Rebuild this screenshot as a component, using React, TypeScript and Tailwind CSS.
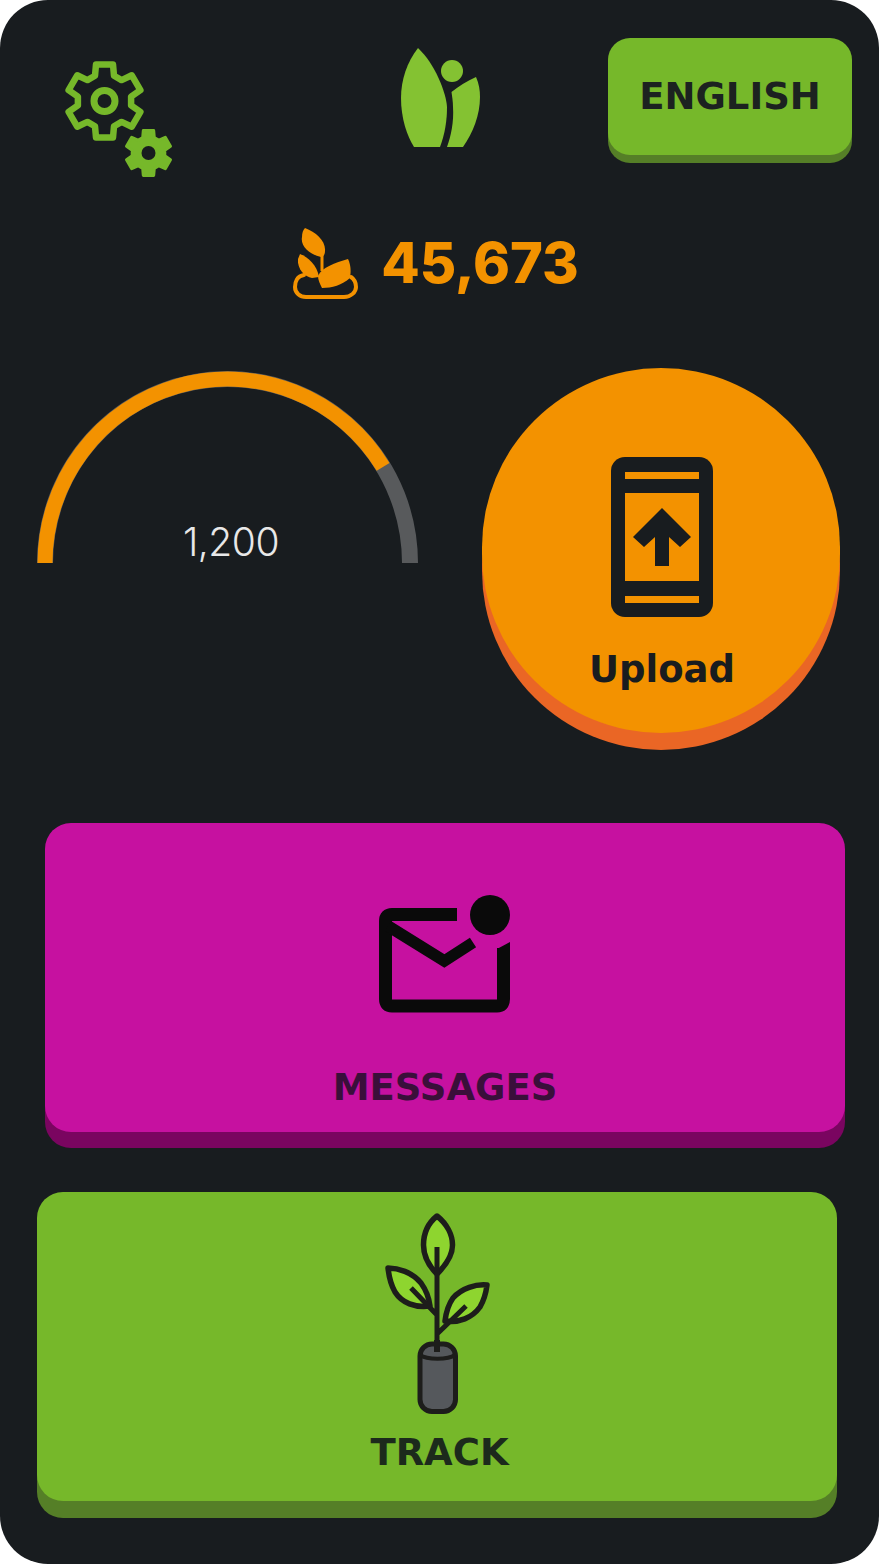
function gearPath(cx: number, cy: number, rOuter: number, rInner: number) {
  // six teeth, first one pointing up
  const pts: string[] = []
  for (let i = 0; i < 6; i++) {
    const a = (i * Math.PI) / 3 - Math.PI / 2
    const offs = [
      [-0.36, rInner],
      [-0.23, rOuter],
      [0.23, rOuter],
      [0.36, rInner],
    ]
    offs.forEach(([o, r]) => {
      const t = a + o
      pts.push(`${(cx + r * Math.cos(t)).toFixed(1)} ${(cy + r * Math.sin(t)).toFixed(1)}`)
    })
  }
  return 'M' + pts.join('L') + 'Z'
}

function GearsIcon() {
  return (
    <svg width="110" height="120" viewBox="64 59 110 120" className="mt-[21px] ml-[64px] shrink-0">
      <path d={gearPath(104.5, 101, 37.5, 27)} fill="none" stroke="#76b82a" strokeWidth="6.5" strokeLinejoin="round" />
      <circle cx="104.500" cy="101" r="10.5" fill="none" stroke="#76b82a" strokeWidth="7" />
      <path d={gearPath(148.5, 153, 23, 16.5)} fill="#76b82a" stroke="#76b82a" strokeWidth="3" strokeLinejoin="round" />
      <circle cx="148.500" cy="153" r="7" fill="#181c1f" />
    </svg>
  )
}

function LogoIcon() {
  return (
    <svg width="80" height="100" viewBox="399 48 80 100" className="mt-[10px] shrink-0">
      <path d="M417 48C406 62 400 80 400 98C400 118 406 136 413 147H439C444 134 446 120 446 107C445 92 434 64 417 48Z" fill="#84c232" />
      <path d="M475 77C478 84 479 90 479 97C479 115 472 133 462 147H446C450 136 453 122 452 107C452 101 451 96 450.500 92C458 86 466 81 475 77Z" fill="#84c232" />
      <circle cx="451" cy="71" r="11" fill="#84c232" />
    </svg>
  )
}

function SproutIcon() {
  return (
    <svg width="66" height="72" viewBox="292 226 66 72" className="shrink-0">
      <path d="M305 227C316 231 326 240 325 250C325 254 323 256 321 256C311 254 300 246 302 236C302 232 303 229 305 227Z" fill="#f39200" />
      <path d="M300 253C308 256 317 264 319 276L312 277C305 276 297 268 298 258Z" fill="#f39200" />
      <path d="M348 258C351 264 351 271 350 277C342 284 332 287 322 287C320 283 318 279 318 275C322 266 335 262 348 258Z" fill="#f39200" />
      <path d="M322 254V270" stroke="#f39200" strokeWidth="3" />
      <path d="M304 274C297 275 295 281 295 286C295 292 300 296 306 296H344C351 296 356 291 356 286C356 281 354 278 351 276" fill="none" stroke="#f39200" strokeWidth="4" strokeLinecap="round" />
    </svg>
  )
}

function Gauge() {
  return (
    <div className="relative w-[382px] h-[194px] shrink-0">
      <svg width="382" height="194" viewBox="36 369 382 194" className="block">
        <path d="M45 562A182.500 184 0 0 1 410 562" fill="none" stroke="#585a5c" strokeWidth="16" />
        <path d="M45 562A182.500 184 0 0 1 383.100 465.900" fill="none" stroke="#f39200" strokeWidth="15" />
      </svg>
      <div className="absolute left-0 right-0 top-[149px] pl-[8px] text-center text-[39px] leading-[46px] font-light text-[#e8e8e8] font-['Inter',sans-serif] tracking-[-0.5px]">
        1,200
      </div>
    </div>
  )
}

function PhoneIcon() {
  return (
    <svg width="102" height="160" viewBox="611 457 102 160" className="shrink-0 ml-[2px]">
      <rect x="611" y="457" width="102" height="160" rx="14" fill="#181c1f" />
      <rect x="625" y="472" width="74" height="7" fill="#f39200" />
      <rect x="625" y="493" width="74" height="88" fill="#f39200" />
      <rect x="625" y="596" width="74" height="7" fill="#f39200" />
      <path d="M662 508L691 537L680 547L669 537V566H655V537L644 547L633 537Z" fill="#181c1f" />
    </svg>
  )
}

function MailIcon() {
  return (
    <svg width="132" height="120" viewBox="379 895 132 120" className="shrink-0">
      <path d="M457 915.500H392Q385.500 915.500 385.500 922V1000Q385.500 1007 392 1007H497Q503.500 1007 503.500 1000V949" fill="none" stroke="#0a0a0a" strokeWidth="13" />
      <path d="M497 950L510 943V952H497Z" fill="#0a0a0a" />
      <path d="M388 927L444.300 962L473 943.500" fill="none" stroke="#0a0a0a" strokeWidth="11.5" />
      <circle cx="490" cy="916" r="20" fill="#0a0a0a" />
    </svg>
  )
}

function PlantIcon() {
  const ink = '#1d1d1b'
  return (
    <svg width="108" height="204" viewBox="384 1212 108 204" className="shrink-0">
      <path d="M438 1216C428 1224 424.500 1235 424.500 1245C424.500 1257 431 1267 438 1274C445 1267 453.500 1257 453.500 1245C453.500 1235 448 1224 438 1216Z" fill="#8ed52f" stroke={ink} strokeWidth="5.5" strokeLinejoin="round" />
      <path d="M389 1268C399 1268 413 1272 422 1283C427 1290 430 1298 431 1306C416 1308 403 1303 396 1292C392 1285 390 1277 389 1268Z" fill="#8ed52f" stroke={ink} strokeWidth="5.5" strokeLinejoin="round" />
      <path d="M488 1285C477 1284 463 1288 454 1298C449 1305 447 1313 446 1321C460 1323 473 1318 481 1307C485 1300 487 1293 488 1285Z" fill="#8ed52f" stroke={ink} strokeWidth="5.5" strokeLinejoin="round" />
      <path d="M438 1247V1350M412 1288L438 1315M467 1306L438 1334" fill="none" stroke={ink} strokeWidth="5" />
      <rect x="421" y="1344" width="35.500" height="67.500" rx="12" fill="#55585c" stroke={ink} strokeWidth="5" />
      <path d="M421 1355C428 1360 449 1360 456 1355" fill="none" stroke={ink} strokeWidth="4" />
      <path d="M438 1340V1352" stroke={ink} strokeWidth="6" />
    </svg>
  )
}

export default function App() {
  return (
    <div className="w-[880px] h-[1564px] bg-white">
      <div className="w-[879px] h-full rounded-[48px] bg-[#181c1f] flex flex-col">
        {/* Top bar */}
        <div className="flex items-start pt-[38px] h-[228px] shrink-0">
          <GearsIcon />
          <div className="ml-[226px]">
            <LogoIcon />
          </div>
          <button className="ml-[128px] w-[244px] h-[117px] rounded-[22px] bg-[#76b82a] shadow-[0_8px_0_#557f27] text-[37px] font-bold font-['DejaVu_Sans',sans-serif] text-[#1c2220]">
            ENGLISH
          </button>
        </div>

        {/* Points */}
        <div className="flex items-center justify-center gap-[23px] h-[70px] shrink-0 pr-[8px]">
          <SproutIcon />
          <span className="text-[56px] font-extrabold leading-none font-['Inter',sans-serif] text-[#f39200]">45,673</span>
        </div>

        {/* Gauge + upload */}
        <div className="flex items-start mt-[70px] h-[382px] shrink-0">
          <div className="ml-[36px] mt-[2px]">
            <Gauge />
          </div>
          <button className="ml-[64px] w-[358px] h-[365px] rounded-full bg-[#f39200] shadow-[0_17px_0_#ea6625] flex flex-col items-center pt-[89px] shrink-0">
            <PhoneIcon />
            <span className="mt-[29px] pl-[2px] text-[37px] leading-[48px] font-bold font-['DejaVu_Sans',sans-serif] text-[#181c1f]">Upload</span>
          </button>
        </div>

        {/* Messages */}
        <button className="ml-[45px] mt-[73px] w-[800px] h-[309px] shrink-0 rounded-[26px] bg-[#c611a0] shadow-[0_16px_0_#7a0560] flex flex-col items-center pt-[71px]">
          <MailIcon />
          <span className="mt-[52px] text-[37px] leading-[44px] font-bold font-['DejaVu_Sans',sans-serif] text-[#3a0f3a]">MESSAGES</span>
        </button>

        {/* Track */}
        <button className="ml-[37px] mt-[60px] w-[800px] h-[309px] shrink-0 rounded-[26px] bg-[#76b82a] shadow-[0_17px_0_#557f27] flex flex-col items-center pt-[20px]">
          <PlantIcon />
          <span className="mt-[15px] pl-[5px] text-[37px] leading-[44px] font-bold font-['DejaVu_Sans',sans-serif] text-[#1c2a1c]">TRACK</span>
        </button>
      </div>
    </div>
  )
}
